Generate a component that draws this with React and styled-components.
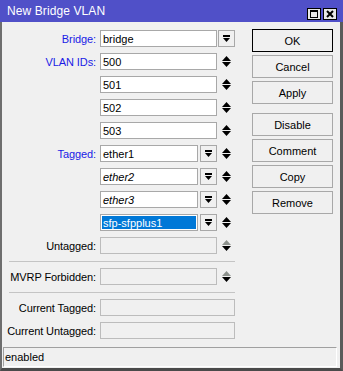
import React from 'react';
import styled, { createGlobalStyle } from 'styled-components';

const GlobalStyle = createGlobalStyle`
  html, body {
    margin: 0;
    padding: 0;
    background: #f0f0f0;
  }
  * {
    box-sizing: border-box;
  }
`;

const Window = styled.div`
  width: 343px;
  height: 371px;
  display: flex;
  flex-direction: column;
  background: #f0f0f0;
  border-left: 2px solid #6e6e6e;
  border-right: 3px solid #5a5a5a;
  border-bottom: 3px solid #4a4a4a;
  font-family: "Liberation Sans", Arial, sans-serif;
  font-size: 11px;
  color: #000;
`;

const TitleBar = styled.div`
  height: 22px;
  flex: none;
  margin: 0 -3px 0 -2px;
  padding: 0 6px 0 7px;
  display: flex;
  align-items: center;
  justify-content: space-between;
  background: #5050c8;
  color: #fff;
  font-size: 12px;
  letter-spacing: 0.1px;
`;

const TitleButtons = styled.div`
  display: flex;
  gap: 2px;
  margin-top: 5px;
`;

const TitleButton = styled.div`
  width: 14px;
  height: 12px;
  border: 1px solid #000;
  background: #e8e8e8;
  display: flex;
  align-items: center;
  justify-content: center;
`;

const Body = styled.div`
  flex: 1;
  display: flex;
`;

const Form = styled.div`
  width: 233px;
  padding-top: 8px;
  display: flex;
  flex-direction: column;
`;

const Row = styled.div`
  display: flex;
  align-items: center;
  height: 17px;
  margin-bottom: ${p => (p.$last ? 0 : 6)}px;
`;

const Label = styled.div`
  width: 98px;
  padding-right: 4px;
  text-align: right;
  white-space: nowrap;
  letter-spacing: -0.1px;
  color: ${p => (p.$required ? '#1a1ae6' : '#000')};
`;

const Input = styled.div`
  width: ${p => p.$w}px;
  height: 17px;
  border: 1px solid ${p => (p.$disabled ? '#bcbcbc' : '#a8a8a8')};
  background: ${p => (p.$disabled ? '#f0f0f0' : '#fff')};
  padding: 1px;
  display: flex;
  font-style: ${p => (p.$italic ? 'italic' : 'normal')};
`;

const InputText = styled.span`
  flex: 1;
  display: flex;
  align-items: center;
  padding-left: 1px;
  background: ${p => (p.$selected ? '#0078d7' : 'transparent')};
  color: ${p => (p.$selected ? '#fff' : '#000')};
`;

const DropButton = styled.div`
  width: 17px;
  height: 17px;
  margin-left: ${p => p.$gap}px;
  border: 1px solid #a8a8a8;
  background: #f0f0f0;
  display: flex;
  align-items: center;
  justify-content: center;
`;

const Spinner = styled.div`
  width: 18px;
  height: 17px;
  display: flex;
  align-items: center;
  justify-content: center;
`;

const Separator = styled.div`
  height: 1px;
  margin: 7px 0 6px 7px;
  background: #c4c4c4;
`;

const ButtonColumn = styled.div`
  margin-left: 17px;
  padding-top: 7px;
  display: flex;
  flex-direction: column;
`;

const Button = styled.div`
  width: 81px;
  height: 23px;
  margin-bottom: 3px;
  margin-top: ${p => (p.$spaced ? 6 : 0)}px;
  border: 1px solid ${p => (p.$default ? '#000' : '#a8a8a8')};
  background: #f0f0f0;
  display: flex;
  align-items: center;
  justify-content: center;
`;

const StatusBar = styled.div`
  height: 20px;
  flex: none;
  margin: 0 3px 1px 1px;
  border: 1px solid;
  border-color: #a0a0a0 #ffffff #ffffff #a0a0a0;
  padding-left: 1px;
  display: flex;
  align-items: center;
`;

const DropIcon = () => (
  <svg width="7" height="7" viewBox="0 0 7 7">
    <rect x="0" y="0" width="7" height="2" fill="#000" />
    <polygon points="0,3 7,3 3.5,7" fill="#000" />
  </svg>
);

const SpinIcon = ({ disabled }) => (
  <svg width="9" height="11" viewBox="0 0 9 11">
    <polygon points="4.5,0 9,5 0,5" fill={disabled ? '#8c918c' : '#000'} />
    <polygon points="0,6 9,6 4.5,11" fill="#000" />
  </svg>
);

const MaxIcon = () => (
  <svg width="8" height="8" viewBox="0 0 8 8">
    <rect x="0.5" y="0.5" width="7" height="7" fill="none" stroke="#000" />
    <rect x="0" y="0" width="8" height="2" fill="#000" />
  </svg>
);

const CloseIcon = () => (
  <svg width="8" height="8" viewBox="0 0 8 8">
    <path d="M1 1 L7 7 M7 1 L1 7" stroke="#000" strokeWidth="2" />
  </svg>
);

const vlanIds = ['500', '501', '502', '503'];
const tagged = [
  { name: 'ether1' },
  { name: 'ether2', italic: true },
  { name: 'ether3', italic: true },
  { name: 'sfp-sfpplus1', selected: true },
];
const buttons = ['OK', 'Cancel', 'Apply', 'Disable', 'Comment', 'Copy', 'Remove'];

export default function App() {
  return (
    <>
      <GlobalStyle />
      <Window>
        <TitleBar>
          <span>New Bridge VLAN</span>
          <TitleButtons>
            <TitleButton><MaxIcon /></TitleButton>
            <TitleButton><CloseIcon /></TitleButton>
          </TitleButtons>
        </TitleBar>
        <Body>
          <Form>
            <Row>
              <Label $required>Bridge:</Label>
              <Input $w={117}><InputText>bridge</InputText></Input>
              <DropButton $gap={1}><DropIcon /></DropButton>
            </Row>
            {vlanIds.map((id, i) => (
              <Row key={id}>
                <Label $required>{i === 0 ? 'VLAN IDs:' : ''}</Label>
                <Input $w={117}><InputText>{id}</InputText></Input>
                <Spinner><SpinIcon /></Spinner>
              </Row>
            ))}
            {tagged.map((t, i) => (
              <Row key={t.name}>
                <Label $required>{i === 0 ? 'Tagged:' : ''}</Label>
                <Input $w={98} $italic={t.italic}>
                  <InputText $selected={t.selected}>{t.name}</InputText>
                </Input>
                <DropButton $gap={2}><DropIcon /></DropButton>
                <Spinner><SpinIcon /></Spinner>
              </Row>
            ))}
            <Row $last>
              <Label>Untagged:</Label>
              <Input $w={117} $disabled />
              <Spinner><SpinIcon disabled /></Spinner>
            </Row>
            <Separator />
            <Row $last>
              <Label>MVRP Forbidden:</Label>
              <Input $w={117} $disabled />
              <Spinner><SpinIcon disabled /></Spinner>
            </Row>
            <Separator />
            <Row>
              <Label>Current Tagged:</Label>
              <Input $w={135} $disabled />
            </Row>
            <Row $last>
              <Label>Current Untagged:</Label>
              <Input $w={135} $disabled />
            </Row>
          </Form>
          <ButtonColumn>
            {buttons.map((b, i) => (
              <Button key={b} $default={i === 0} $spaced={b === 'Disable'}>{b}</Button>
            ))}
          </ButtonColumn>
        </Body>
        <StatusBar>enabled</StatusBar>
      </Window>
    </>
  );
}
